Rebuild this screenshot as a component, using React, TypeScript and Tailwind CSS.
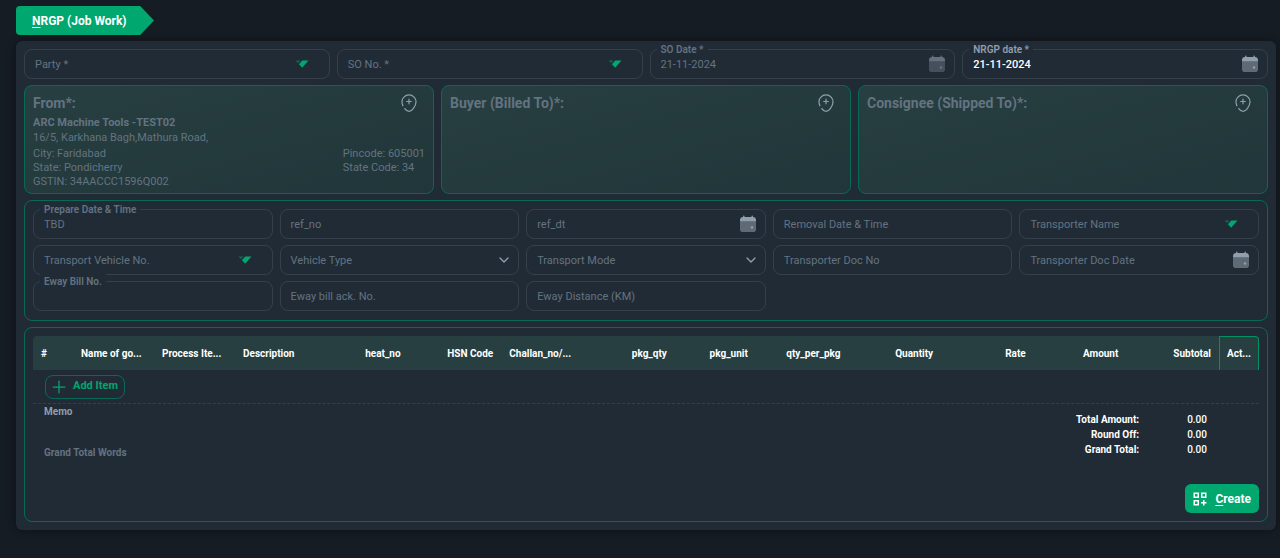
import { useState, type ReactNode } from 'react'
import { ChevronDown, Plus } from 'lucide-react'
import clsx from 'clsx'

type FieldKind = 'text' | 'search' | 'select' | 'date'

interface FieldProps {
  id: string
  label: string
  kind?: FieldKind
  value?: string
  floating?: boolean
  active?: boolean
  muted?: boolean
}

interface Column {
  label: string
  align?: 'right'
  narrow?: boolean
}

const HEADER_FIELDS: FieldProps[] = [
  { id: 'party', label: 'Party *', kind: 'search' },
  { id: 'so_no', label: 'SO No. *', kind: 'search' },
  { id: 'so_date', label: 'SO Date *', kind: 'date', value: '21-11-2024', floating: true, muted: true },
  { id: 'nrgp_date', label: 'NRGP date *', kind: 'date', value: '21-11-2024', floating: true, active: true }
]

const TRANSPORT_FIELDS: FieldProps[] = [
  { id: 'prepare_dt', label: 'Prepare Date & Time', value: 'TBD', floating: true },
  { id: 'ref_no', label: 'ref_no' },
  { id: 'ref_dt', label: 'ref_dt', kind: 'date' },
  { id: 'removal_dt', label: 'Removal Date & Time' },
  { id: 'transporter', label: 'Transporter Name', kind: 'search' },
  { id: 'vehicle_no', label: 'Transport Vehicle No.', kind: 'search' },
  { id: 'vehicle_type', label: 'Vehicle Type', kind: 'select' },
  { id: 'mode', label: 'Transport Mode', kind: 'select' },
  { id: 'doc_no', label: 'Transporter Doc No' },
  { id: 'doc_date', label: 'Transporter Doc Date', kind: 'date' },
  { id: 'eway_no', label: 'Eway Bill No.', floating: true },
  { id: 'eway_ack', label: 'Eway bill ack. No.' },
  { id: 'eway_km', label: 'Eway Distance (KM)' }
]

const COLUMNS: Column[] = [
  { label: 'Name of go...', narrow: true },
  { label: 'Process Ite...', narrow: true },
  { label: 'Description', narrow: true },
  { label: 'heat_no', align: 'right' },
  { label: 'HSN Code', align: 'right' },
  { label: 'Challan_no/...', narrow: true },
  { label: 'pkg_qty', align: 'right' },
  { label: 'pkg_unit', align: 'right', narrow: true },
  { label: 'qty_per_pkg', align: 'right' },
  { label: 'Quantity', align: 'right' },
  { label: 'Rate', align: 'right' },
  { label: 'Amount', align: 'right' },
  { label: 'Subtotal', align: 'right' }
]

const TOTALS = [
  { label: 'Total Amount:', value: '0.00' },
  { label: 'Round Off:', value: '0.00' },
  { label: 'Grand Total:', value: '0.00' }
]

function SearchArrow() {
  return (
    <svg width="14" height="8" viewBox="0 0 14 8" aria-hidden="true">
      <path d="M.5.4h5L2.900 3z" fill="#00A76F" opacity=".5" />
      <path d="M7.300.4h6.200L7.200 7.700 3.900 4.300z" fill="#00A76F" />
    </svg>
  )
}

function CalendarIcon() {
  return (
    <svg width="18" height="18" viewBox="0 0 18 18" fill="#919EAB" aria-hidden="true">
      <path d="M1 6.500h16v7.700a2.800 2.800 0 0 1-2.800 2.800H3.800A2.800 2.800 0 0 1 1 14.200z" opacity=".55" />
      <path d="M4.100 1.200a.7.7 0 0 1 1.400 0V2h7V1.200a.7.7 0 0 1 1.400 0V2A3.300 3.300 0 0 1 17 5.100V6.500H1V5.100A3.300 3.300 0 0 1 4.100 2z" />
      <circle cx="13" cy="12.500" r="1.300" />
    </svg>
  )
}

function AddressPinIcon() {
  return (
    <svg width="16" height="18" viewBox="0 0 16 18" fill="none" stroke="#919EAB" strokeWidth="1.200" strokeLinecap="round" aria-hidden="true">
      <path d="M1.900 11.800C.5 8.400.9 5 2.900 3.100a6.900 6.900 0 0 1 10.200 0c2.700 2.900 2.100 7.400-.6 11.300-1.200 1.800-2.800 2.900-4.500 2.900s-3.100-1-4.200-2.700" />
      <path d="M8 5.200v4.600M5.700 7.500h4.600" />
    </svg>
  )
}

function CreateIcon() {
  return (
    <svg width="14" height="14" viewBox="0 0 14 14" fill="none" stroke="currentColor" strokeWidth="1.500" aria-hidden="true">
      <rect x="1.250" y="1.250" width="4" height="4" />
      <rect x="8.750" y="1.250" width="4" height="4" />
      <rect x="1.250" y="8.750" width="4" height="4" />
      <path d="M10.750 8v5.500M8 10.750h5.500" />
    </svg>
  )
}

function Field({ id, label, kind = 'text', value = '', floating, active, muted }: FieldProps) {
  const [text, setText] = useState(value)
  const control = clsx(
    'w-full h-full min-w-0 pl-2.5 bg-transparent text-[11px] outline-none appearance-none',
    active ? 'text-white font-medium' : 'text-[#637381]'
  )

  return (
    <div className="relative flex items-center h-[30px] rounded-lg border border-[#35404b] focus-within:border-[#00A76F]">
      <label
        htmlFor={id}
        className={clsx(
          'absolute whitespace-nowrap pointer-events-none',
          floating ? 'left-1.5 -top-2 px-1 bg-[#212b36] text-[10px] leading-4 font-semibold' : 'left-2.5 pt-0.5 text-[11px] leading-4',
          active ? 'text-[#919EAB]' : 'text-[#637381]',
          !floating && text && 'hidden'
        )}
      >
        {label}
      </label>
      {kind === 'select' ? (
        <>
          <select id={id} value={text} onChange={(e) => setText(e.target.value)} className={control}>
            <option value="" />
          </select>
          <ChevronDown size={16} className="absolute right-1.5 text-[#919EAB] pointer-events-none" />
        </>
      ) : (
        <input id={id} type="text" value={text} onChange={(e) => setText(e.target.value)} disabled={muted} className={control} />
      )}
      {kind === 'search' && (
        <button type="button" aria-label={`Search ${label}`} className="mr-5 shrink-0">
          <SearchArrow />
        </button>
      )}
      {kind === 'date' && (
        <button type="button" aria-label={`Pick ${label}`} disabled={muted} className={clsx('mr-2 shrink-0', muted && 'opacity-60')}>
          <CalendarIcon />
        </button>
      )}
    </div>
  )
}

function AddressCard({ title, children }: { title: string; children?: ReactNode }) {
  return (
    <section className="rounded-lg border border-[#076a57] bg-linear-to-br from-[#283f41] to-[#20363a] px-2 pt-2 pb-1 text-[11px] text-[#637381]">
      <div className="flex items-start justify-between pr-2">
        <h2 className="text-sm leading-[18px] font-bold">{title}</h2>
        <button type="button" aria-label={`Change ${title}`} className="h-[18px]">
          <AddressPinIcon />
        </button>
      </div>
      {children}
    </section>
  )
}

function App() {
  return (
    <div className="min-h-screen bg-[#161c24] pl-4 pr-1 pt-1.5 pb-7 font-['Roboto',sans-serif]">
      <h1 className="w-[138px] h-[29px] pl-4 flex items-center rounded-l bg-[#00A76F] text-xs font-bold text-white [clip-path:polygon(0_0,90%_0,100%_50%,90%_100%,0_100%)]">
        <span><u className="underline-offset-2">N</u>RGP (Job Work)</span>
      </h1>

      <main className="mt-1.5 p-2 flex flex-col gap-1.5 rounded-md bg-[#212b36] shadow-[0_0_8px_rgba(0,0,0,0.4)]">
        <div className="grid grid-cols-4 gap-[7px]">
          {HEADER_FIELDS.map((f) => <Field key={f.id} {...f} />)}
        </div>

        {/* addresses */}
        <div className="grid grid-cols-3 gap-[7px]">
          <AddressCard title="From*:">
            <p className="mt-[3px] leading-[15px] font-bold">ARC Machine Tools -TEST02</p>
            <p className="leading-[15px]">16/5, Karkhana Bagh,Mathura Road,</p>
            <div className="mt-0.5 flex justify-between leading-[14px]">
              <div>
                <p>City: Faridabad</p>
                <p>State: Pondicherry</p>
                <p>GSTIN: 34AACCC1596Q002</p>
              </div>
              <div>
                <p>Pincode: 605001</p>
                <p>State Code: 34</p>
              </div>
            </div>
          </AddressCard>
          <AddressCard title="Buyer (Billed To)*:" />
          <AddressCard title="Consignee (Shipped To)*:" />
        </div>

        {/* transport details */}
        <section className="px-2 pt-2 pb-[9px] grid grid-cols-5 gap-x-[7px] gap-y-1.5 rounded-lg border border-[#076a57]">
          {TRANSPORT_FIELDS.map((f) => <Field key={f.id} {...f} />)}
        </section>

        {/* items */}
        <section className="p-2 rounded-lg border border-[#076a57]">
          <table className="w-full table-fixed border-separate border-spacing-0">
            <colgroup>
              <col className="w-10" />
              {COLUMNS.map((c) => <col key={c.label} className={c.narrow ? 'w-[81px]' : ''} />)}
              <col className="w-10" />
            </colgroup>
            <thead>
              <tr className="h-[34px] text-[10px] text-white whitespace-nowrap">
                <th className="px-2 rounded-tl bg-[#283f41] text-left">#</th>
                {COLUMNS.map((c) => (
                  <th key={c.label} className={clsx('px-2 bg-[#283f41]', c.align === 'right' ? 'text-right' : 'text-left')}>
                    {c.label}
                  </th>
                ))}
                <th className="px-[7px] rounded-tr border border-b-0 border-[#009263] bg-[#283f41] text-left">Act...</th>
              </tr>
            </thead>
            <tbody>
              <tr>
                <td colSpan={15} className="h-[34px] pl-3 border-b border-dashed border-[#35404b]">
                  <button type="button" className="flex items-center gap-1 h-6 pl-[3px] pr-1.5 rounded-lg border border-[#076a57] text-[11px] font-bold text-[#00A76F]">
                    <Plus size={20} strokeWidth={1.5} />
                    Add Item
                  </button>
                </td>
              </tr>
            </tbody>
          </table>

          <div className="flex justify-between pl-[11px] pr-[52px] text-[10px] font-bold">
            <div className="flex flex-col gap-[27px] pt-px leading-[14px] text-[#637381]">
              <label htmlFor="memo" className="text-[#919EAB]">Memo</label>
              <p>Grand Total Words</p>
            </div>
            <input id="memo" type="text" className="flex-1 h-5 min-w-0 bg-transparent px-2 font-normal text-white outline-none" />
            <dl className="pt-2 leading-[15px] text-white">
              {TOTALS.map((t) => (
                <div key={t.label} className="flex justify-end gap-12">
                  <dt>{t.label}</dt>
                  <dd className="font-medium">{t.value}</dd>
                </div>
              ))}
            </dl>
          </div>

          <div className="mt-6 flex justify-end">
            <button type="button" className="flex items-center gap-2 h-[29px] px-2 rounded-md bg-[#00A76F] text-xs font-bold text-white">
              <CreateIcon />
              <span><u className="underline-offset-2">C</u>reate</span>
            </button>
          </div>
        </section>
      </main>
    </div>
  )
}

export default App
